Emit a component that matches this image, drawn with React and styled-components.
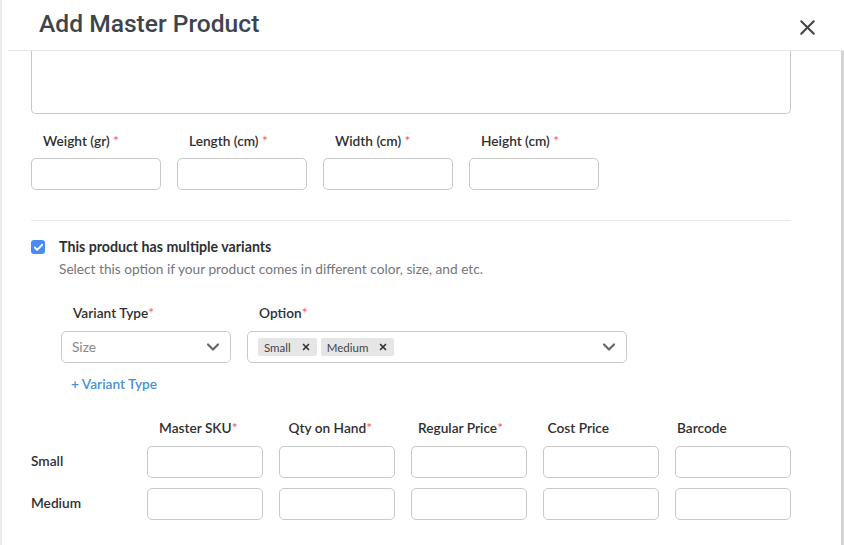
import React from "react";
import styled, { createGlobalStyle } from "styled-components";
import { X, ChevronDown, Check } from "lucide-react";

const GlobalStyle = createGlobalStyle`
    body {
        margin: 0;
        background: #fff;
        font-family: "Lato", "Open Sans", sans-serif;
        color: #333;
    }
`;

const dimensions = ["Weight (gr)", "Length (cm)", "Width (cm)", "Height (cm)"];
const variantCols = [
    { name: "Master SKU", required: true },
    { name: "Qty on Hand", required: true },
    { name: "Regular Price", required: true },
    { name: "Cost Price" },
    { name: "Barcode" },
];
const variantRows = ["Small", "Medium"];
const options = ["Small", "Medium"];

const App = () => {
    return (
        <Page>
            <GlobalStyle />
            <Modal>
                <Header>
                    <Title>Add Master Product</Title>
                    <CloseButton>
                        <X size={25} strokeWidth={2} />
                    </CloseButton>
                </Header>
                <Body>
                    <TextArea />

                    <DimensionGrid>
                        {dimensions.map((d) => (
                            <Field key={d}>
                                <Label indent>
                                    {d} <Req>*</Req>
                                </Label>
                                <Input />
                            </Field>
                        ))}
                    </DimensionGrid>

                    <Divider />

                    <CheckRow>
                        <CheckBox>
                            <Check size={11} strokeWidth={4} color="#fff" />
                        </CheckBox>
                        <div>
                            <CheckTitle>This product has multiple variants</CheckTitle>
                            <CheckHint>
                                Select this option if your product comes in different color, size, and etc.
                            </CheckHint>
                        </div>
                    </CheckRow>

                    <VariantArea>
                        <VariantGrid>
                            <Field gap={10}>
                                <Label indent>
                                    Variant Type<Req>*</Req>
                                </Label>
                                <Select>
                                    <Placeholder>Size</Placeholder>
                                    <ChevronDown size={20} strokeWidth={2.6} color="#666" />
                                </Select>
                            </Field>
                            <Field gap={10}>
                                <Label indent>
                                    Option<Req>*</Req>
                                </Label>
                                <Select>
                                    <Tags>
                                        {options.map((o) => (
                                            <Tag key={o}>
                                                {o}
                                                <X size={10} strokeWidth={4} color="#333" />
                                            </Tag>
                                        ))}
                                    </Tags>
                                    <ChevronDown size={20} strokeWidth={2.6} color="#666" />
                                </Select>
                            </Field>
                        </VariantGrid>
                        <AddLink>+ Variant Type</AddLink>
                    </VariantArea>

                    <TableHead>
                        {variantCols.map((c) => (
                            <Label key={c.name}>
                                {c.name}
                                {c.required && <Req>*</Req>}
                            </Label>
                        ))}
                    </TableHead>
                    {variantRows.map((r) => (
                        <TableRow key={r}>
                            <RowName>{r}</RowName>
                            {variantCols.map((c) => (
                                <Input key={c.name} />
                            ))}
                        </TableRow>
                    ))}
                </Body>
            </Modal>
        </Page>
    );
};

export default App;

const Page = styled.div`
    height: 100vh;
    border-left: 2px solid #ececec;
    box-sizing: border-box;
    padding-left: 6px;
    overflow: hidden;
`;

const Modal = styled.div`
    display: flex;
    flex-direction: column;
    height: 100%;
`;

const Header = styled.div`
    display: flex;
    align-items: center;
    justify-content: space-between;
    height: 51px;
    box-sizing: border-box;
    padding: 0 24px 0 31px;
    border-bottom: 1px solid #e6e6e6;
`;

const Title = styled.h1`
    margin: 0 0 4px;
    font-family: "Roboto", "Liberation Sans", sans-serif;
    font-weight: 500;
    font-size: 24.6px;
    color: #3e444c;
`;

const CloseButton = styled.div`
    display: flex;
    color: #444;
    margin-top: 5px;
`;

const Body = styled.div`
    flex: 1;
    padding: 0 50px 0 23px;
    border-right: 3px solid #d4d4d4;
`;

const TextArea = styled.div`
    height: 63px;
    box-sizing: border-box;
    border: 1px solid #c9c9c9;
    border-top: none;
    border-radius: 0 0 5px 5px;
`;

const DimensionGrid = styled.div`
    display: grid;
    grid-template-columns: repeat(4, 130px);
    gap: 16px;
    margin-top: 19px;
`;

const Field = styled.div`
    display: flex;
    flex-direction: column;
    gap: ${(p) => p.gap || 9}px;
`;

const Label = styled.div`
    font-size: 13.7px;
    line-height: 16px;
    font-weight: 600;
    color: #2f2f33;
    padding-left: ${(p) => (p.indent ? "12px" : "0")};
    white-space: nowrap;
`;

const Req = styled.span`
    color: #ec5b5b;
    font-weight: 400;
`;

const Input = styled.div`
    height: 32px;
    box-sizing: border-box;
    border: 1px solid #c9c9c9;
    border-radius: 5px;
    background: #fff;
`;

const Divider = styled.div`
    height: 1px;
    background: #e8e8e8;
    margin-top: 30px;
`;

const CheckRow = styled.div`
    display: flex;
    gap: 14px;
    margin-top: 18px;
`;

const CheckBox = styled.div`
    width: 14px;
    height: 14px;
    margin-top: 1px;
    border-radius: 3px;
    background: #4a8cf0;
    display: flex;
    align-items: center;
    justify-content: center;
`;

const CheckTitle = styled.div`
    font-size: 14.2px;
    line-height: 16px;
    font-weight: 700;
    color: #2f2f33;
`;

const CheckHint = styled.div`
    margin-top: 6px;
    font-size: 13.7px;
    line-height: 16px;
    color: #75757a;
`;

const VariantArea = styled.div`
    padding-left: 30px;
    margin-top: 28px;
`;

const VariantGrid = styled.div`
    display: grid;
    grid-template-columns: 170px 380px;
    gap: 16px;
`;

const Select = styled.div`
    height: 32px;
    box-sizing: border-box;
    border: 1px solid #c9c9c9;
    border-radius: 5px;
    display: flex;
    align-items: center;
    justify-content: space-between;
    padding: 0 7px 0 10px;
`;

const Placeholder = styled.span`
    font-size: 13.7px;
    color: #888;
    margin-bottom: 1px;
`;

const Tags = styled.div`
    display: flex;
    gap: 4px;
`;

const Tag = styled.span`
    display: inline-flex;
    align-items: center;
    gap: 10px;
    height: 18px;
    padding: 0 6px;
    background: #e6e6e6;
    border-radius: 2px;
    font-size: 11.5px;
    color: #444;
`;

const AddLink = styled.div`
    margin-top: 13px;
    padding-left: 10px;
    font-size: 13.7px;
    line-height: 16px;
    font-weight: 600;
    color: #4a90d9;
`;

const TableHead = styled.div`
    display: grid;
    grid-template-columns: repeat(5, 129.5px);
    margin-top: 28px;
    padding-left: 128px;
`;

const TableRow = styled.div`
    display: grid;
    grid-template-columns: 100px repeat(5, 116px);
    gap: 16px;
    align-items: center;
    margin-top: 10px;
`;

const RowName = styled.div`
    font-size: 13.7px;
    line-height: 16px;
    font-weight: 600;
    color: #2f2f33;
    margin-bottom: 3px;
`;
